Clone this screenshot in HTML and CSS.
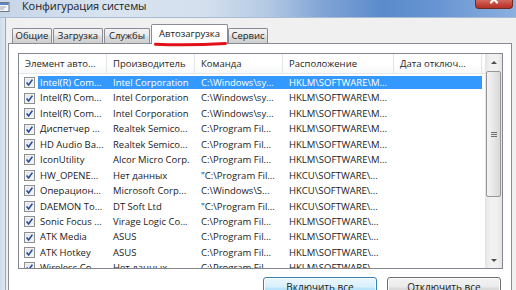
FILE: index.html
```html
<!DOCTYPE html>
<html lang="ru">
<head>
    <meta charset="UTF-8">
    <link rel="stylesheet" href="styles.css">
</head>
<body>
    <div class="window">
        <div class="titlebar">
            <svg class="app-icon" width="12" height="12" viewBox="0 0 12 12">
                <rect x="-3" y="1.5" width="12" height="9" fill="#f4f6f9" stroke="#6d7886"/>
                <rect x="-2.5" y="2" width="11" height="2" fill="#5b86c4"/>
                <rect x="0" y="5.5" width="6" height="1" fill="#9aa6b4"/>
                <rect x="0" y="7.5" width="4" height="1" fill="#9aa6b4"/>
            </svg>
            <span class="title">Конфигурация системы</span>
            <div class="close-btn">
                <svg width="38" height="9" viewBox="0 0 38 9">
                    <path d="M16 -3 L22 3.5 M22 -3 L16 3.5" stroke="#fff" stroke-width="2.2" stroke-linecap="round"/>
                </svg>
            </div>
        </div>

        <div class="client">
            <div class="frame-edge"></div>
            <div class="content">
                <div class="tabs">
                    <div class="tab tab-general">Общие</div>
                    <div class="tab tab-boot">Загрузка</div>
                    <div class="tab tab-services">Службы</div>
                    <div class="tab tab-startup active">
                        Автозагрузка
                        <svg class="red-mark" width="76" height="8" viewBox="0 0 76 8">
                            <path d="M2.5 4.2 Q 36 5.6 72.5 3.4" fill="none" stroke="#e3101c" stroke-width="3" stroke-linecap="round"/>
                        </svg>
                    </div>
                    <div class="tab tab-tools">Сервис</div>
                </div>

                <div class="panel">
                    <div class="list">
                        <div class="list-main">
                            <div class="list-header">
                                <div class="hcell">Элемент авто...</div>
                                <div class="hcell">Производитель</div>
                                <div class="hcell">Команда</div>
                                <div class="hcell">Расположение</div>
                                <div class="hcell">Дата отключ...</div>
                            </div>
                            <div class="rows">
                                <div class="row selected">
                                    <div class="cell first"><span class="chk"></span>Intel(R) Com...</div>
                                    <div class="cell">Intel Corporation</div>
                                    <div class="cell">C:\Windows\sy...</div>
                                    <div class="cell">HKLM\SOFTWARE\M...</div>
                                    <div class="cell"></div>
                                </div>
                                <div class="row">
                                    <div class="cell first"><span class="chk"></span>Intel(R) Com...</div>
                                    <div class="cell">Intel Corporation</div>
                                    <div class="cell">C:\Windows\sy...</div>
                                    <div class="cell">HKLM\SOFTWARE\M...</div>
                                    <div class="cell"></div>
                                </div>
                                <div class="row">
                                    <div class="cell first"><span class="chk"></span>Intel(R) Com...</div>
                                    <div class="cell">Intel Corporation</div>
                                    <div class="cell">C:\Windows\sy...</div>
                                    <div class="cell">HKLM\SOFTWARE\M...</div>
                                    <div class="cell"></div>
                                </div>
                                <div class="row">
                                    <div class="cell first"><span class="chk"></span>Диспетчер ...</div>
                                    <div class="cell">Realtek Semico...</div>
                                    <div class="cell">C:\Program Fil...</div>
                                    <div class="cell">HKLM\SOFTWARE\M...</div>
                                    <div class="cell"></div>
                                </div>
                                <div class="row">
                                    <div class="cell first"><span class="chk"></span>HD Audio Ba...</div>
                                    <div class="cell">Realtek Semico...</div>
                                    <div class="cell">C:\Program Fil...</div>
                                    <div class="cell">HKLM\SOFTWARE\M...</div>
                                    <div class="cell"></div>
                                </div>
                                <div class="row">
                                    <div class="cell first"><span class="chk"></span>IconUtility</div>
                                    <div class="cell">Alcor Micro Corp.</div>
                                    <div class="cell">C:\Program Fil...</div>
                                    <div class="cell">HKLM\SOFTWARE\M...</div>
                                    <div class="cell"></div>
                                </div>
                                <div class="row">
                                    <div class="cell first"><span class="chk"></span>HW_OPENE...</div>
                                    <div class="cell">Нет данных</div>
                                    <div class="cell">"C:\Program Fil...</div>
                                    <div class="cell">HKCU\SOFTWARE\...</div>
                                    <div class="cell"></div>
                                </div>
                                <div class="row">
                                    <div class="cell first"><span class="chk"></span>Операцион...</div>
                                    <div class="cell">Microsoft Corp...</div>
                                    <div class="cell">C:\Windows\S...</div>
                                    <div class="cell">HKCU\SOFTWARE\...</div>
                                    <div class="cell"></div>
                                </div>
                                <div class="row">
                                    <div class="cell first"><span class="chk"></span>DAEMON To...</div>
                                    <div class="cell">DT Soft Ltd</div>
                                    <div class="cell">"C:\Program Fil...</div>
                                    <div class="cell">HKCU\SOFTWARE\...</div>
                                    <div class="cell"></div>
                                </div>
                                <div class="row">
                                    <div class="cell first"><span class="chk"></span>Sonic Focus ...</div>
                                    <div class="cell">Virage Logic Co...</div>
                                    <div class="cell">C:\Program Fil...</div>
                                    <div class="cell">HKLM\SOFTWARE\...</div>
                                    <div class="cell"></div>
                                </div>
                                <div class="row">
                                    <div class="cell first"><span class="chk"></span>ATK Media</div>
                                    <div class="cell">ASUS</div>
                                    <div class="cell">C:\Program Fil...</div>
                                    <div class="cell">HKLM\SOFTWARE\...</div>
                                    <div class="cell"></div>
                                </div>
                                <div class="row">
                                    <div class="cell first"><span class="chk"></span>ATK Hotkey</div>
                                    <div class="cell">ASUS</div>
                                    <div class="cell">C:\Program Fil...</div>
                                    <div class="cell">HKLM\SOFTWARE\...</div>
                                    <div class="cell"></div>
                                </div>
                                <div class="row">
                                    <div class="cell first"><span class="chk"></span>Wireless Co...</div>
                                    <div class="cell">Нет данных</div>
                                    <div class="cell">C:\Program Fil...</div>
                                    <div class="cell">HKLM\SOFTWARE\...</div>
                                    <div class="cell"></div>
                                </div>
                            </div>
                        </div>

                        <div class="scrollbar">
                            <div class="sb-arrow"><span class="tri-up"></span></div>
                            <div class="sb-track">
                                <div class="sb-thumb"><span class="grip"></span></div>
                            </div>
                            <div class="sb-arrow"><span class="tri-down"></span></div>
                        </div>
                    </div>

                    <div class="buttons">
                        <div class="btn btn-hot">Включить все</div>
                        <div class="btn">Отключить все</div>
                    </div>
                </div>
            </div>
        </div>
    </div>
</body>
</html>
```

FILE: styles.css
```css
* {
    margin: 0;
    padding: 0;
    box-sizing: border-box;
}

body {
    font-family: "Open Sans", "Noto Sans", sans-serif;
    font-size: 9.5px;
    color: #1a1a1a;
    background: #f0f0f0;
}

.window {
    width: 516px;
    height: 290px;
    overflow: hidden;
    background: #f0f0f0;
}

/* title bar */
.titlebar {
    height: 18px;
    display: flex;
    align-items: flex-start;
    background: linear-gradient(90deg, #c6d5e8 0%, #d9e4f0 22%, #d3dfed 40%, #b3c9e4 52%, #82a6d6 62%, #5b8bcc 74%, #6694d2 84%, #8cb0df 100%);
    border-bottom: 1px solid #a9bcd3;
}

.app-icon {
    margin-top: 1px;
    flex-shrink: 0;
}

.title {
    margin-left: 10px;
    font-size: 11px;
    line-height: 12px;
    color: #1c1c1c;
    letter-spacing: -0.1px;
}

.close-btn {
    margin-left: auto;
    margin-right: 3px;
    width: 38px;
    height: 9px;
    background: linear-gradient(#d46a5f, #c2433a 60%, #b63228);
    border: 1px solid #6e2a24;
    border-top: none;
    border-radius: 0 0 4px 4px;
    overflow: hidden;
}

.close-btn svg {
    display: block;
    margin: -1px 0 0 -1px;
}

/* client area */
.client {
    display: flex;
    height: 272px;
}

.frame-edge {
    width: 6px;
    background: linear-gradient(90deg, #cddbea, #dfe8f2);
    border-right: 1px solid #9aa7b6;
}

.content {
    padding-left: 2px;
}

.tabs {
    display: flex;
    align-items: flex-end;
    height: 19px;
    margin-top: 6px;
    margin-left: 4px;
    position: relative;
    z-index: 1;
}

.tab {
    height: 15px;
    line-height: 14px;
    text-align: center;
    border: 1px solid #898c95;
    border-bottom: none;
    border-radius: 2px 2px 0 0;
    background: linear-gradient(#f3f3f3, #ebebeb 45%, #dddddd 50%, #cfcfcf);
    margin-right: 1px;
    white-space: nowrap;
}

.tab-general { width: 40px; }
.tab-boot { width: 50px; }
.tab-services { width: 46px; }
.tab-tools { width: 40px; }

.tab.active {
    width: 77px;
    height: 20px;
    line-height: 17px;
    margin-bottom: -1px;
    margin-right: 0;
    background: #fff;
    position: relative;
}

.red-mark {
    position: absolute;
    left: 1px;
    top: 15px;
}

.panel {
    width: 504px;
    height: 260px;
    background: #fff;
    border: 1px solid #898c95;
    padding: 9px 8px 0 9px;
}

/* list view */
.list {
    display: flex;
    height: 216px;
    border: 1px solid #828790;
}

.list-main {
    flex: 1;
    overflow: hidden;
}

.list-header,
.row {
    display: grid;
    grid-template-columns: 88px 88px 88px 111px 88px;
}

.list-header {
    height: 20px;
    width: 466px;
    border-bottom: 1px solid #e5e8ec;
    background: linear-gradient(#fff, #fff 50%, #f7f8f9);
}

.hcell {
    padding-left: 6px;
    line-height: 19px;
    border-right: 1px solid #e3e5e8;
    color: #262626;
    white-space: nowrap;
    overflow: hidden;
}

.rows {
    padding-top: 1px;
}

.row {
    height: 15.45px;
    line-height: 15.45px;
    width: 463px;
}

.cell {
    padding-left: 6px;
    white-space: nowrap;
    overflow: hidden;
}

.cell.first {
    display: flex;
    align-items: center;
    padding-left: 5px;
}

.row.selected {
    color: #fff;
    background: linear-gradient(#3399ff, #3399ff) no-repeat 19px 1px / calc(100% - 19px) calc(100% - 2px);
}

.chk {
    width: 11px;
    height: 11px;
    flex-shrink: 0;
    margin-right: 5px;
    border: 1px solid #8e8f8f;
    background:
        url("data:image/svg+xml,%3Csvg xmlns='http://www.w3.org/2000/svg' width='9' height='9' viewBox='0 0 9 9'%3E%3Cpath d='M1.6 4.6 L3.6 6.9 L7.4 1.6' fill='none' stroke='%23254a9e' stroke-width='1.6'/%3E%3C/svg%3E") no-repeat center,
        linear-gradient(135deg, #dfe3e8, #f7f8fa);
    box-shadow: inset 0 0 0 1px #f2f2f2;
}

/* scrollbar */
.scrollbar {
    width: 17px;
    display: flex;
    flex-direction: column;
    background: linear-gradient(90deg, #e4e4e4, #f1f1f1 30%, #f1f1f1 70%, #e4e4e4);
}

.sb-arrow {
    height: 16px;
    display: flex;
    align-items: center;
    justify-content: center;
}

.tri-up,
.tri-down {
    width: 0;
    height: 0;
    border-left: 3px solid transparent;
    border-right: 3px solid transparent;
}

.tri-up {
    border-bottom: 3px solid #4d4d4d;
}

.tri-down {
    border-top: 3px solid #4d4d4d;
}

.sb-track {
    flex: 1;
    padding-top: 1px;
}

.sb-thumb {
    height: 126px;
    margin: 0 1px;
    border: 1px solid #979797;
    border-radius: 2px;
    background: linear-gradient(90deg, #f3f3f3, #e8e8e8 50%, #d8d8d8);
    display: flex;
    align-items: center;
    justify-content: center;
}

.grip {
    width: 6px;
    height: 5px;
    background: repeating-linear-gradient(#6e6e6e 0 1px, transparent 1px 2px);
}

/* buttons */
.buttons {
    display: flex;
    justify-content: flex-end;
    gap: 10px;
    margin-top: 8px;
    padding-right: 2px;
}

.btn {
    width: 114px;
    height: 21px;
    line-height: 19px;
    text-align: center;
    font-size: 10px;
    border: 1px solid #707070;
    border-radius: 3px;
    background: linear-gradient(#f2f2f2, #ebebeb 48%, #dddddd 52%, #cfcfcf);
    box-shadow: inset 0 0 0 1px #fcfcfc;
}

.btn-hot {
    border-color: #3c7fb1;
    background: linear-gradient(#eaf6fd, #d9f0fc 48%, #bee6fd 52%, #a7d9f5);
}
```
